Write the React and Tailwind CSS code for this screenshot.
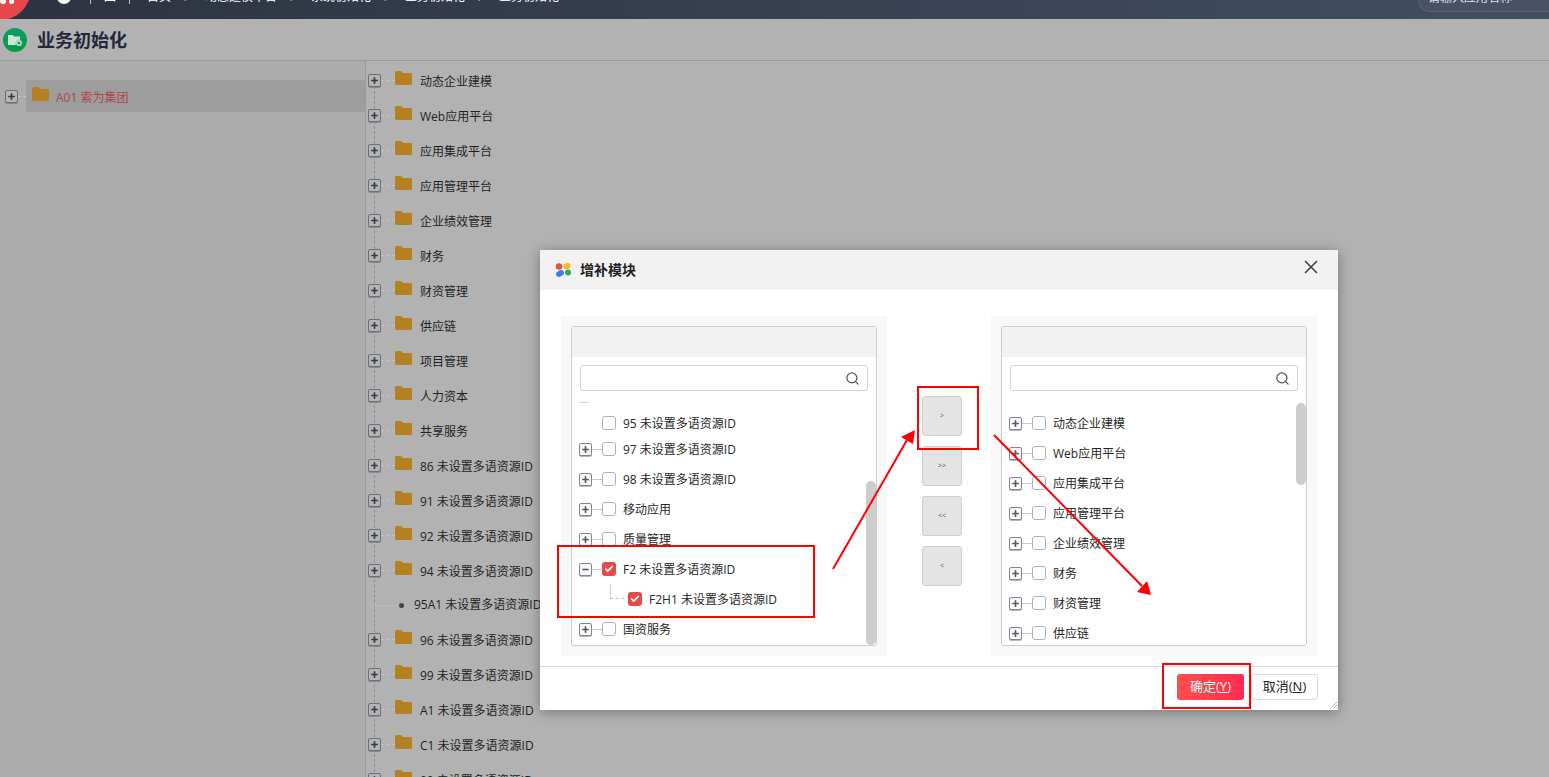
import { Check, Minus, Plus, Search, X, User } from "lucide-react";

const font = { fontFamily: '"Open Sans", "Noto Sans CJK SC", sans-serif' };

const mainRows = [
  "动态企业建模",
  "Web应用平台",
  "应用集成平台",
  "应用管理平台",
  "企业绩效管理",
  "财务",
  "财资管理",
  "供应链",
  "项目管理",
  "人力资本",
  "共享服务",
  "86 未设置多语资源ID",
  "91 未设置多语资源ID",
  "92 未设置多语资源ID",
  "94 未设置多语资源ID",
  "95A1 未设置多语资源ID",
  "96 未设置多语资源ID",
  "99 未设置多语资源ID",
  "A1 未设置多语资源ID",
  "C1 未设置多语资源ID",
  "00 未设置多语资源ID",
];

const rightRows = ["动态企业建模", "Web应用平台", "应用集成平台", "应用管理平台", "企业绩效管理", "财务", "财资管理", "供应链"];

const crumbs = ["动态建模平台", "系统初始化", "业务初始化", "业务初始化"];

const Folder = () => (
  <svg width="17" height="14" viewBox="0 0 17 14" className="shrink-0">
    <path d="M0 1.5C0 .7.6 0 1.4 0h4.2c.5 0 .9.2 1.2.6L8 2h7.6c.8 0 1.4.6 1.4 1.4v9.2c0 .8-.6 1.4-1.4 1.4H1.4C.6 14 0 13.4 0 12.6z" fill="#b5801f" />
  </svg>
);

const ExpandBox = ({ open, dim }) => (
  <span
    className={`flex h-[13px] w-[13px] shrink-0 items-center justify-center rounded-[2px] border ${
      dim ? "border-[#67707c] bg-[#b4b4b4] shadow-[0_1px_0_#8c8c8c]" : "border-[#808690] bg-[#fafafa] shadow-[0_1px_0_#b5b5b5]"
    }`}
  >
    {open ? (
      <Minus size={9} strokeWidth={3.5} className="text-[#555]" />
    ) : (
      <Plus size={9} strokeWidth={4.5} className={dim ? "text-[#3c3c44]" : "text-[#5a5a62]"} />
    )}
  </span>
);

const CheckBox = ({ checked }) =>
  checked ? (
    <span className="flex h-[14px] w-[14px] shrink-0 items-center justify-center rounded-[3px] bg-[#e24c4c]">
      <Check size={10} strokeWidth={4} className="text-white" />
    </span>
  ) : (
    <span className="h-[14px] w-[14px] shrink-0 rounded-[3px] border border-[#aab1c2] bg-white"></span>
  );

const Dash = ({ w }) => <span className={`shrink-0 border-t border-dashed border-[#c4c4c4] ${w}`}></span>;

const CheckRow = ({ label, height = "h-[30px]", expand = true, open, checked }) => (
  <div className={`flex shrink-0 items-center ${height}`}>
    {expand ? <ExpandBox open={open} /> : <span className="w-[13px] shrink-0"></span>}
    {expand ? <Dash w="w-[10px]" /> : <span className="w-[10px] shrink-0"></span>}
    <CheckBox checked={checked} />
    <span className="mt-[2px] ml-[7px] text-xs whitespace-nowrap text-[#262626]">{label}</span>
  </div>
);

const SearchBox = () => (
  <div className="mx-2 mt-2 flex h-[26px] shrink-0 items-center justify-end rounded-[3px] border border-[#d4d4d4] bg-white pr-[7px]">
    <Search size={15} strokeWidth={2} className="text-[#4a5560]" />
  </div>
);

const Panel = ({ children, barClass }) => (
  <div className="h-[340px] w-[326px] shrink-0 bg-[#f8f8f8] p-[10px]">
    <div className="relative flex h-[320px] flex-col overflow-hidden rounded-[3px] border border-[#cccccc] bg-white">
      <div className="h-[30px] shrink-0 bg-[#f2f2f2]"></div>
      <SearchBox />
      {children}
      <span className={`absolute right-0 w-[10px] rounded-[5px] bg-[#cdcdcd] ${barClass}`}></span>
    </div>
  </div>
);

const MoveButton = ({ label }) => (
  <button className="flex h-[40px] w-[40px] items-center justify-center rounded-[3px] border border-[#cfcfcf] bg-[#e4e4e4] text-[7px] text-[#555]">
    {label}
  </button>
);

const Arrows = () => (
  <svg className="pointer-events-none absolute top-0 left-0" width="1549" height="777">
    <line x1="833" y1="569" x2="907" y2="440" stroke="#ff0000" strokeWidth="2" />
    <polygon points="915,430 901,437 913,444" fill="#ff0000" />
    <line x1="994" y1="435" x2="1142" y2="586" stroke="#ff0000" strokeWidth="2" />
    <polygon points="1151,595 1137,592 1147,581" fill="#ff0000" />
  </svg>
);

const Modal = () => (
  <div className="absolute top-[250px] left-[540px] flex h-[460px] w-[798px] flex-col bg-white shadow-[0_2px_12px_rgba(0,0,0,0.35)]">
    <div className="flex h-[40px] shrink-0 items-center bg-[#f2f2f2] pr-[16px] pl-[15px]">
      <svg width="17" height="16" viewBox="0 0 17 16">
        <circle cx="4" cy="4.5" r="3.2" fill="#e8503f" />
        <ellipse cx="12" cy="4" rx="3.6" ry="3" fill="#f7b91c" transform="rotate(-30 12 4)" />
        <ellipse cx="5" cy="11.5" rx="4.2" ry="3" fill="#3b7ee8" transform="rotate(-30 5 11.5)" />
        <circle cx="13" cy="10.5" r="3" fill="#34a853" />
      </svg>
      <span className="ml-[8px] text-sm font-bold text-[#222]">增补模块</span>
      <X size={22} strokeWidth={1.8} className="mt-[-6px] ml-auto text-[#444]" />
    </div>

    <div className="flex h-[376px] shrink-0 items-start pt-[26px] pl-[21px]">
      <Panel barClass="top-[154px] bottom-0">
        <div className="ml-[7px] flex min-h-0 flex-1 flex-col overflow-hidden">
          <span className="mt-[11px] h-[9px] w-[10px] shrink-0 border-t border-[#d8d8d8]"></span>
          <CheckRow label="95 未设置多语资源ID" height="h-[23px]" expand={false} />
          <CheckRow label="97 未设置多语资源ID" />
          <CheckRow label="98 未设置多语资源ID" />
          <CheckRow label="移动应用" />
          <CheckRow label="质量管理" />
          <CheckRow label="F2 未设置多语资源ID" open checked />
          <div className="flex h-[30px] shrink-0 items-center pl-[31px]">
            <span className="h-[15px] w-[14px] shrink-0 self-start border-b border-l border-dashed border-[#c4c4c4]"></span>
            <span className="w-[4px]"></span>
            <CheckBox checked />
            <span className="mt-[2px] ml-[7px] text-xs whitespace-nowrap text-[#262626]">F2H1 未设置多语资源ID</span>
          </div>
          <CheckRow label="国资服务" />
        </div>
      </Panel>

      <div className="ml-[35px] flex w-[40px] shrink-0 flex-col gap-[10px] pt-[80px]">
        <MoveButton label=">" />
        <MoveButton label=">>" />
        <MoveButton label="<<" />
        <MoveButton label="<" />
      </div>

      <div className="ml-[29px]">
        <Panel barClass="top-[76px] h-[82px]">
          <div className="mt-[17px] ml-[7px] flex min-h-0 flex-1 flex-col overflow-hidden">
            {rightRows.map((row) => (
              <CheckRow key={row} label={row} />
            ))}
          </div>
        </Panel>
      </div>
    </div>

    <div className="relative flex flex-1 items-start justify-end gap-[7px] border-t border-[#d9d9d9] pt-[7px] pr-[20px]">
      <button className="h-[26px] w-[67px] rounded-[3px] bg-gradient-to-r from-[#ff4d4d] to-[#ff2a50] text-[13px] text-white">
        确定(<span className="underline">Y</span>)
      </button>
      <button className="h-[26px] w-[67px] rounded-[3px] border border-[#d9d9d9] bg-white text-[13px] text-[#222]">
        取消(<span className="underline">N</span>)
      </button>
      <svg className="absolute right-0 bottom-0" width="10" height="10">
        <path d="M9 2 2 9M9 5 5 9M9 8 8 9" stroke="#bbb" strokeWidth="1" />
      </svg>
    </div>
  </div>
);

export default function App() {
  return (
    <div className="relative h-screen w-full overflow-hidden bg-[#b2b2b2]" style={font}>
      <header className="relative h-[19px] overflow-hidden bg-gradient-to-r from-[#2d3340] to-[#434e63]">
        <span className="absolute top-[-42px] left-[-31px] h-[62px] w-[62px] rounded-full bg-[#e8474a]"></span>
        <span className="absolute top-[-4px] left-[0px] h-[8px] w-[6px] rounded-full bg-white"></span>
        <span className="absolute top-[-4px] left-[9px] h-[8px] w-[5px] rounded-full bg-white"></span>
        <div className="mt-[-13px] ml-[57px] flex h-5 items-center text-xs whitespace-nowrap text-white">
          <span className="h-[14px] w-[14px] rounded-full bg-white"></span>
          <span className="ml-[19px] h-[14px] w-px bg-[#b8bdc7]"></span>
          <User size={16} fill="white" className="mt-[-4px] ml-[11px]" />
          <span className="ml-[11px] h-[14px] w-px bg-[#b8bdc7]"></span>
          <span className="ml-[17px]">首页</span>
          {crumbs.map((crumb, i) => (
            <span key={i} className="flex items-center">
              <span className="mx-[12px] w-[10px] overflow-hidden text-center text-[9px] text-[#d5d8de]">▶</span>
              <span>{crumb}</span>
            </span>
          ))}
        </div>
        <div className="absolute top-[-30px] right-[-20px] flex h-[42px] w-[151px] items-end rounded-[12px] border border-[#5c6579] bg-[#485166] pb-[5px] pl-[9px] text-xs text-[#e3e5ea]">
          请输入应用名称
        </div>
      </header>

      <div className="flex h-[42px] items-center border-b border-[#9a9a9a] pl-[3px]">
        <span className="flex h-[24px] w-[24px] items-center justify-center rounded-full bg-gradient-to-b from-[#0d9c66] to-[#0a9a40]">
          <svg width="14" height="12" viewBox="0 0 14 12">
            <path d="M0 1h5l1 1.5h6V6a3.5 3.5 0 0 0-4 5H0z" fill="#c9e6d6" />
            <circle cx="11" cy="9" r="2.2" fill="none" stroke="#c9e6d6" strokeWidth="1.4" />
          </svg>
        </span>
        <span className="ml-[10px] text-[18px] leading-none font-bold text-[#23273a]">业务初始化</span>
      </div>

      <div className="flex h-[716px]">
        <aside className="w-[365px] shrink-0 bg-[#acacac] pt-[19px]">
          <div className="flex h-[32px] items-center">
            <span className="ml-[5px] flex items-center">
              <ExpandBox dim />
              <Dash w="w-[8px]" />
            </span>
            <div className="flex h-[32px] flex-1 items-center rounded-[2px] bg-[#9d9d9d] pl-[6px]">
              <span className="mt-[-5px]"><Folder /></span>
              <span className="mt-[3px] ml-[7px] text-xs text-[#b0444a]">A01 索为集团</span>
            </div>
          </div>
        </aside>

        <main className="relative flex-1 border-l border-[#9a9a9a] pt-[2px]">
          <span className="absolute top-[20px] bottom-0 left-[8px] border-l border-dashed border-[#8f8f8f]"></span>
          {mainRows.map((row) =>
            row.startsWith("95A1") ? (
              <div key={row} className="relative flex h-[34px] items-center pl-[8px]">
                <Dash w="w-[24px]" />
                <span className="ml-[1px] h-[5px] w-[5px] rounded-full bg-[#444]"></span>
                <span className="ml-[10px] text-xs whitespace-nowrap text-[#1f1f1f]">{row}</span>
              </div>
            ) : (
              <div key={row} className="relative flex h-[35px] items-center pl-[2px]">
                <ExpandBox dim />
                <Dash w="w-[14px]" />
                <span className="mt-[-5px]"><Folder /></span>
                <span className="mt-[2px] ml-[8px] text-xs whitespace-nowrap text-[#1f1f1f]">{row}</span>
              </div>
            )
          )}
        </main>
      </div>

      <Modal />

      <div className="absolute top-[545px] left-[557px] h-[73px] w-[258px] border-2 border-[#ff0000]"></div>
      <div className="absolute top-[386px] left-[917px] h-[64px] w-[62px] border-2 border-[#ff0000]"></div>
      <div className="absolute top-[663px] left-[1162px] h-[46px] w-[89px] border-2 border-[#ff0000]"></div>
      <Arrows />
    </div>
  );
}
